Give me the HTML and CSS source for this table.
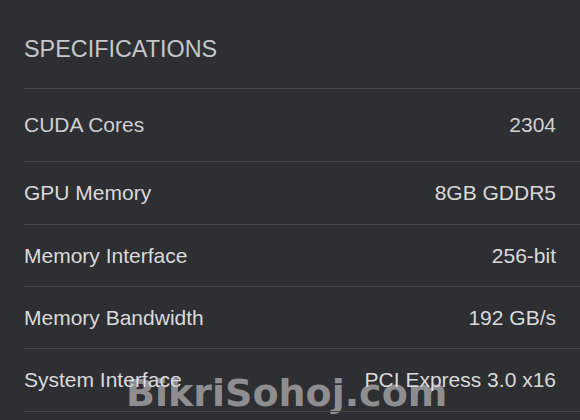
FILE: index.html
```html
<!DOCTYPE html>
<html>
<head>
<meta charset="utf-8">
<link rel="stylesheet" href="styles.css">
</head>
<body>
<section class="specs">
  <h2 class="title">SPECIFICATIONS</h2>
  <div class="row first"><span class="label">CUDA Cores</span><span class="value">2304</span></div>
  <div class="row"><span class="label">GPU Memory</span><span class="value">8GB GDDR5</span></div>
  <div class="row"><span class="label">Memory Interface</span><span class="value">256-bit</span></div>
  <div class="row"><span class="label">Memory Bandwidth</span><span class="value">192 GB/s</span></div>
  <div class="row last"><span class="label">System Interface</span><span class="value">PCI Express 3.0 x16</span></div>
</section>
<div class="watermark">BikriSohoj.com</div>
</body>
</html>
```

FILE: styles.css
```css
html, body {
  margin: 0;
  padding: 0;
  background: #2e2f33;
  height: 100%;
  overflow: hidden;
}
body {
  font-family: "Liberation Sans", Arial, sans-serif;
  position: relative;
}
.specs {
  padding: 35px 24px 0 24px;
  margin-right: -24px;
}
.title {
  margin: 0 0 25px 0;
  font-size: 23.4px;
  line-height: 28px;
  font-weight: normal;
  color: #c6c7c9;
}
.row {
  display: flex;
  justify-content: space-between;
  align-items: center;
  height: 62px;
  box-sizing: border-box;
  border-top: 1px solid #43454a;
  padding-right: 24px;
  font-size: 21px;
  line-height: 24px;
  color: #dadadb;
  position: relative;
  z-index: 1;
}
.row.first {
  height: 73px;
  color: #cfd0d2;
}
.row:nth-child(3) { height: 63px; }
.row.last {
  height: 64px;
  border-bottom: 1px solid #43454a;
}
.watermark {
  position: absolute;
  left: 126px;
  top: 374px;
  font-family: "DejaVu Sans", sans-serif;
  font-weight: bold;
  font-size: 38px;
  line-height: 38px;
  color: #8e8e90;
  z-index: 0;
  white-space: nowrap;
}
```
